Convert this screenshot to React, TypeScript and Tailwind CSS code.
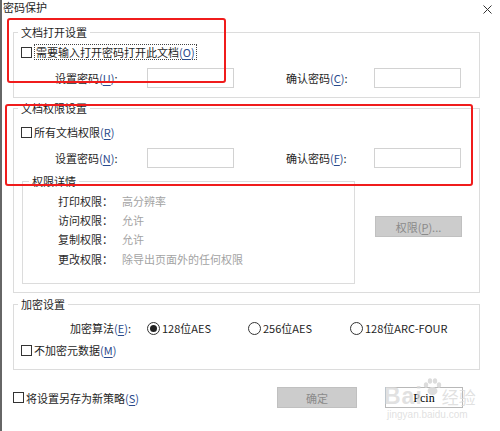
import React from "react";

const Mn = ({ k }: { k: string }) => (
  <span className="text-[#2a4a8c]">
    (<span className="underline underline-offset-2">{k}</span>)
  </span>
);

const Box = () => <span className="block w-[11px] h-[11px] border border-[#333] bg-white shrink-0" />;

const Radio = ({ checked, label, w }: { checked?: boolean; label: string; w?: string }) => (
  <div className={`flex items-center gap-[2px] ${w ?? ""}`}>
    <span className="flex items-center justify-center w-[13px] h-[13px] rounded-full border border-[#333] bg-white shrink-0">
      {checked && <span className="block w-[7px] h-[7px] rounded-full bg-[#222]" />}
    </span>
    <span>{label}</span>
  </div>
);

const Legend = ({ children, inner }: { children: React.ReactNode; inner?: boolean }) => (
  <legend className={`${inner ? "ml-[6px]" : "ml-[4px]"} px-[3px] leading-[16px]`}>{children}</legend>
);

const Input = () => <div className="w-[87px] h-[20px] border border-[#d2d2d2] bg-white shrink-0" />;

const PwRow = ({ a, b }: { a: string; b: string }) => (
  <div className="mt-[8px] h-[20px] flex items-center pl-[41px]">
    <span className="w-[92px] shrink-0">
      设置密码<Mn k={a} />:
    </span>
    <Input />
    <span className="ml-[52px] w-[88px] shrink-0">
      确认密码<Mn k={b} />:
    </span>
    <Input />
  </div>
);

const Perm = ({ l, v, cls }: { l: string; v: string; cls?: string }) => (
  <div className={`flex items-center h-[19px] ${cls ?? ""}`}>
    <span className="w-[64px] text-[#2a2a2a]">{l}</span>
    <span className="text-[#a3a3a3]">{v}</span>
  </div>
);

export default function App() {
  return (
    <div className="relative w-[500px] h-[431px] overflow-hidden bg-white border-l-2 border-[#666] text-[11px] leading-[16px] text-[#1e1e1e] [font-family:'Noto_Sans_CJK_SC',sans-serif]">
      <div className="flex justify-between h-[20px]">
        <span className="pl-[1px] leading-[14px]">密码保护</span>
        <svg className="mt-[5px] mr-[8px]" width="9" height="9" viewBox="0 0 9 9">
          <path d="M0.5 0.5 L8.5 8.5 M8.5 0.5 L0.5 8.5" stroke="#333" strokeWidth="1" fill="none" />
        </svg>
      </div>

      <div className="pl-[11px] flex flex-col">
        {/* Group 1 */}
        <fieldset className="mt-[4px] w-[467px] border border-[#dcdcdc] pb-[9px]">
          <Legend>文档打开设置</Legend>
          <div className="mt-[4px] h-[16px] flex items-center pl-[7px] gap-[2px]">
            <Box />
            <span className="border border-dotted border-[#444] px-[1px] leading-[14px]">
              需要输入打开密码打开此文档<Mn k="O" />
            </span>
          </div>
          <PwRow a="U" b="C" />
        </fieldset>

        {/* Group 2 */}
        <fieldset className="mt-[2px] w-[467px] border border-[#dcdcdc] pb-[8px]">
          <Legend>文档权限设置</Legend>
          <div className="mt-[8px] h-[16px] flex items-center pl-[7px] gap-[2px]">
            <Box />
            <span>
              所有文档权限<Mn k="R" />
            </span>
          </div>
          <PwRow a="N" b="F" />
          <div className="flex mt-[5px] pl-[8px]">
            <fieldset className="w-[333px] border border-[#dcdcdc] pb-[15px]">
              <Legend inner>权限详情</Legend>
              <div className="mt-[2px] pl-[35px] flex flex-col">
                <Perm l="打印权限：" v="高分辨率" />
                <Perm l="访问权限：" v="允许" />
                <Perm l="复制权限：" v="允许" />
                <Perm l="更改权限：" v="除导出页面外的任何权限" cls="mt-[1px]" />
              </div>
            </fieldset>
            <div className="ml-[20px] mt-[43px] w-[87px] h-[21px] flex items-center justify-center bg-[#cccccc] border border-[#c0c0c0] text-[#8a8a8a]">
              权限(<span className="underline underline-offset-2">P</span>)...
            </div>
          </div>
        </fieldset>

        {/* Group 3 */}
        <fieldset className="mt-[3px] w-[467px] border border-[#dcdcdc] pb-[11px]">
          <Legend>加密设置</Legend>
          <div className="mt-[8px] h-[16px] flex items-center pl-[56px]">
            <span className="w-[77px] shrink-0">
              加密算法<Mn k="E" />:
            </span>
            <Radio checked label="128位AES" w="w-[101px]" />
            <Radio label="256位AES" w="w-[102px]" />
            <Radio label="128位ARC-FOUR" />
          </div>
          <div className="mt-[6px] h-[16px] flex items-center pl-[7px] gap-[2px]">
            <Box />
            <span>
              不加密元数据<Mn k="M" />
            </span>
          </div>
        </fieldset>

        {/* Bottom row */}
        <div className="mt-[17px] h-[21px] flex items-center">
          <div className="flex items-center gap-[2px]">
            <Box />
            <span>
              将设置另存为新策略<Mn k="S" />
            </span>
          </div>
          <div className="ml-auto mr-[37px] flex gap-[28px]">
            <div className="w-[80px] h-[21px] flex items-center justify-center bg-[#cccccc] border border-[#c0c0c0] text-[#8a8a8a]">
              确定
            </div>
            <div className="w-[78px] h-[21px] flex items-center justify-center bg-white border border-[#b8b8b8] text-black text-[12px] [font-family:'Liberation_Serif',serif]">
              Pcin
            </div>
          </div>
        </div>
      </div>

      {/* Red annotation boxes */}
      <div className="absolute left-[5px] top-[18px] w-[219px] h-[65px] border-2 border-[#f01c1c] rounded-[3px] pointer-events-none" />
      <div className="absolute left-[3px] top-[104px] w-[468px] h-[82px] border-2 border-[#f01c1c] rounded-[3px] pointer-events-none" />

      {/* Watermark */}
      <div className="absolute left-[382px] top-[376px] pointer-events-none text-[#d9d9d9]/80 [font-family:'Liberation_Sans',sans-serif]">
        <div className="flex items-end h-[32px]">
          <span className="text-[23px] font-bold leading-[24px] tracking-[1px]">Bai</span>
          <svg width="20" height="18" viewBox="0 0 20 18" className="-ml-[1px] mb-[12px]">
            <g fill="#dcdcdc">
              <ellipse cx="4" cy="7" rx="2.2" ry="2.8" />
              <ellipse cx="8" cy="3" rx="2.2" ry="2.8" />
              <ellipse cx="13" cy="3" rx="2.2" ry="2.8" />
              <ellipse cx="17" cy="7" rx="2.2" ry="2.8" />
              <ellipse cx="10.5" cy="13" rx="5" ry="4" />
            </g>
          </svg>
          <span className="text-[17px] leading-[22px] [font-family:'Noto_Sans_CJK_SC',sans-serif]">经验</span>
        </div>
        <div className="text-[10px] leading-[12px] mt-[1px] pl-[3px]">jingyan.baidu.com</div>
      </div>
    </div>
  );
}
